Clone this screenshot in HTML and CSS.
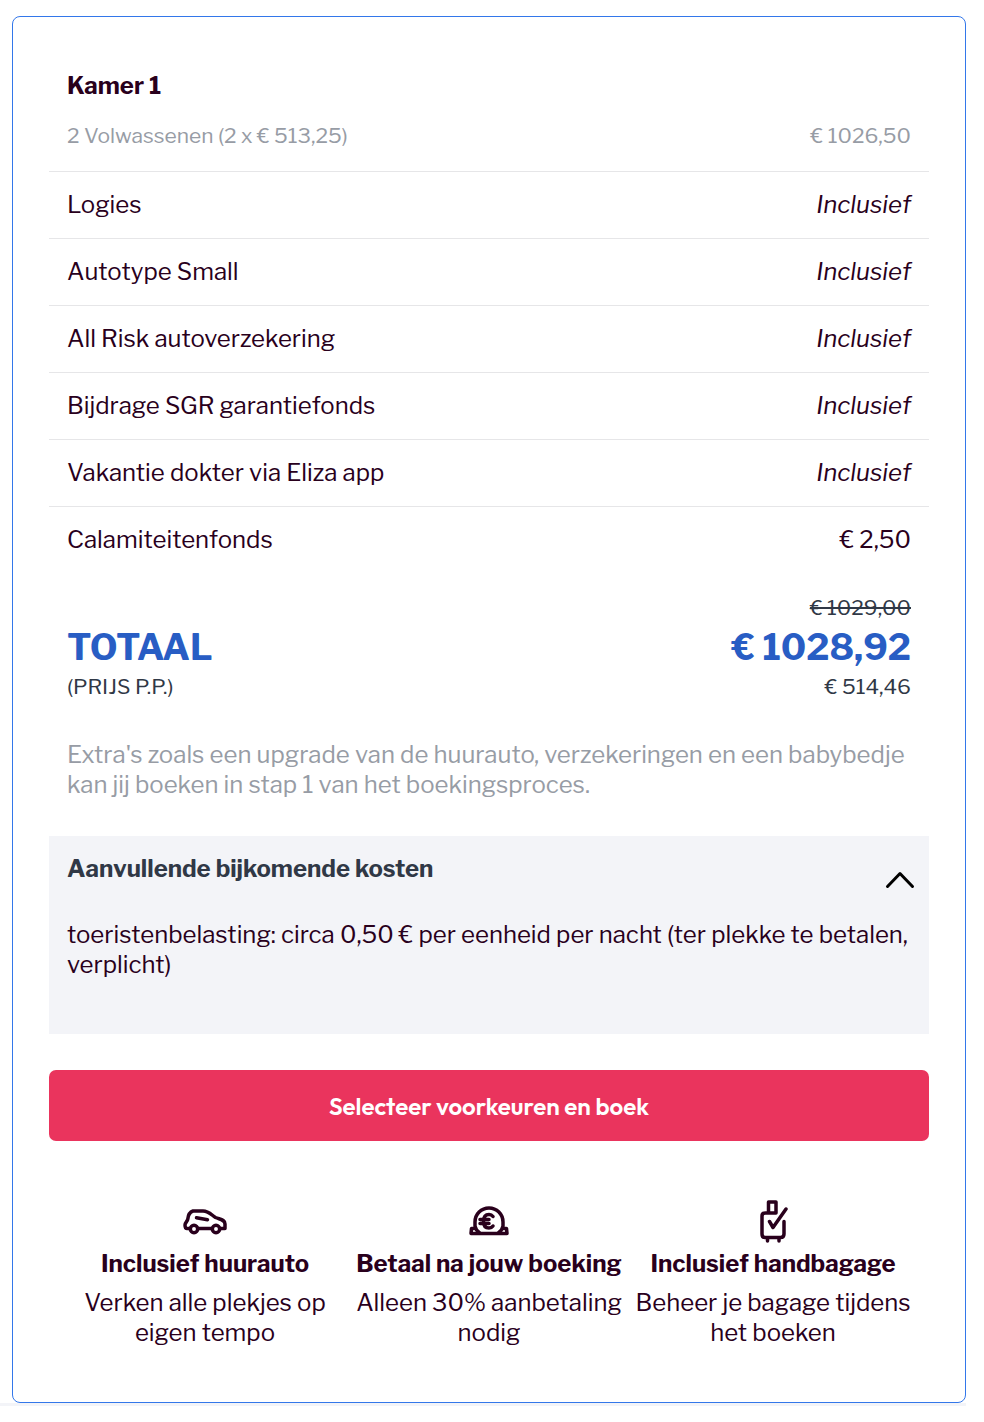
FILE: index.html
```html
<!DOCTYPE html>
<html lang="nl">
<head>
<meta charset="utf-8">
<meta name="viewport" content="width=device-width, initial-scale=1">
<title>Prijsoverzicht</title>
<link rel="stylesheet" href="styles.css">
</head>
<body>
<main class="page">
  <section class="card">
    <h2 class="room">Kamer 1</h2>
    <table class="prices">
      <tbody>
        <tr class="guests"><th scope="row">2 Volwassenen (2 x € 513,25)</th><td>€ 1026,50</td></tr>
        <tr><th scope="row">Logies</th><td><em>Inclusief</em></td></tr>
        <tr><th scope="row">Autotype Small</th><td><em>Inclusief</em></td></tr>
        <tr><th scope="row">All Risk autoverzekering</th><td><em>Inclusief</em></td></tr>
        <tr><th scope="row">Bijdrage SGR garantiefonds</th><td><em>Inclusief</em></td></tr>
        <tr><th scope="row">Vakantie dokter via Eliza app</th><td><em>Inclusief</em></td></tr>
        <tr><th scope="row">Calamiteitenfonds</th><td>€ 2,50</td></tr>
      </tbody>
    </table>
    <div class="total">
      <div class="total-label"><strong>TOTAAL</strong><span>(PRIJS P.P.)</span></div>
      <div class="total-price"><s>€ 1029,00</s><strong>€ 1028,92</strong><span>€ 514,46</span></div>
    </div>
    <p class="note">Extra's zoals een upgrade van de huurauto, verzekeringen en een babybedje kan jij boeken in stap 1 van het boekingsproces.</p>
    <section class="extra">
      <button class="extra-toggle" type="button" aria-expanded="true" aria-controls="costs">
        <span>Aanvullende bijkomende kosten</span>
        <svg class="chevron" viewBox="0 0 30 20" aria-hidden="true"><path d="M2.500 16.500 15 3.500 27.500 16.500"/></svg>
      </button>
      <p class="costs" id="costs">toeristenbelasting: circa 0,50 € per eenheid per nacht (ter plekke te betalen, verplicht)</p>
    </section>
    <button class="book" type="button">Selecteer voorkeuren en boek</button>
    <ul class="perks">
      <li>
        <svg class="icon" viewBox="0 0 48 48" aria-hidden="true"><path d="M8.500 31.500H6Q4 31.500 4 28C4 25.500 6.500 24.500 6.800 22Q7.500 15.500 12 14H22C28 14 31 18.500 34.500 20.500C39 22.500 44 22.500 44 27V31.500H39M17.500 31.500H31M15.500 20.800 26.500 22.800"/><circle cx="13" cy="32" r="3.700"/><circle cx="35" cy="32" r="3.700"/></svg>
        <h3>Inclusief huurauto</h3>
        <p>Verken alle plekjes op eigen tempo</p>
      </li>
      <li>
        <svg class="icon" viewBox="0 0 48 48" aria-hidden="true"><path d="M10 29V25A14 14 0 0 1 38 25V29M10 29Q11 34 15 36M38 29Q37 34 33 36M10 31.500H6.500L6 36.500H42L41.500 31.500H38"/><path class="euro" d="M28 19.500Q26.500 17.500 24 17.500Q18.500 17.500 18.500 24.500Q18.500 31 24 31Q26.500 31 28 29M15 22.500H24M15 26.500H24"/></svg>
        <h3>Betaal na jouw boeking</h3>
        <p>Alleen 30% aanbetaling nodig</p>
      </li>
      <li>
        <svg class="icon" viewBox="0 0 48 48" aria-hidden="true"><path d="M19.500 16V5H27V16H16.500Q13 16 13 19V37Q13 40.500 16 40.500H31.500Q35 40.500 35 37V24.500M18.500 41V44M30 41V44M20.500 24.500 24 30.500 37 12"/></svg>
        <h3>Inclusief handbagage</h3>
        <p>Beheer je bagage tijdens het boeken</p>
      </li>
    </ul>
  </section>
</main>
</body>
</html>
```
FILE: styles.css
```css
* { box-sizing: border-box; }
body {
  margin: 0;
  background: #fff;
  color: #29001c;
  font: 24px/30px "Libre Franklin", "Liberation Sans", Arial, sans-serif;
}
h2, h3, p, ul { margin: 0; }
button { font: inherit; border: 0; cursor: pointer; }
.page { margin-right: 18px; padding: 16px 0 0 12px; border-bottom: 3px solid #f3f4f8; }
.card { padding: 54px 36px; border: 1px solid #3377ea; border-radius: 8px; }
.room { padding: 0 18px; font-size: 24px; line-height: 30px; }
.prices { width: 100%; border-collapse: collapse; }
.prices th, .prices td { height: 67px; padding: 0 18px; text-align: left; font-weight: 400; }
.prices td { text-align: right; }
.prices tr + tr { border-top: 1px solid #e6e6e8; }
.prices .guests { color: #979ca5; font-size: 21px; }
.prices .guests th, .prices .guests td { height: 70px; }
.total { display: flex; justify-content: space-between; align-items: flex-end; padding: 20px 18px 0; color: #303846; font-size: 21px; }
.total-label, .total-price { display: flex; flex-direction: column; }
.total-price { align-items: flex-end; }
.total strong { color: #285dc4; font-size: 36px; line-height: 49px; font-weight: 700; }
.note { padding: 38px 18px 36px; color: #979ca5; }
.extra { padding: 18px 18px 54px; background: #f3f4f8; }
.extra-toggle { display: flex; justify-content: space-between; width: 100%; padding: 0; background: none; color: #303846; font-weight: 700; text-align: left; }
.chevron { width: 30px; height: 20px; margin: 16px -4px 0 0; fill: none; stroke: #000; stroke-width: 3; stroke-linecap: round; stroke-linejoin: round; }
.costs { padding-top: 30px; }
.book { width: 100%; margin-top: 36px; padding: 21px 20px 20px; border-radius: 7px; background: #ea345d; color: #fff; font-family: Outfit, Lato, sans-serif; font-weight: 600; }
.perks { display: grid; grid-template-columns: repeat(3, 1fr); gap: 8px; margin-top: 56px; padding: 0 18px; list-style: none; text-align: center; }
.icon { display: block; width: 48px; height: 48px; margin: 0 auto 4px; fill: none; stroke: #29001c; stroke-width: 3.500; stroke-linejoin: round; stroke-linecap: round; }
.perks h3 { margin-bottom: 9px; font-size: 24px; line-height: 30px; white-space: nowrap; }
```
